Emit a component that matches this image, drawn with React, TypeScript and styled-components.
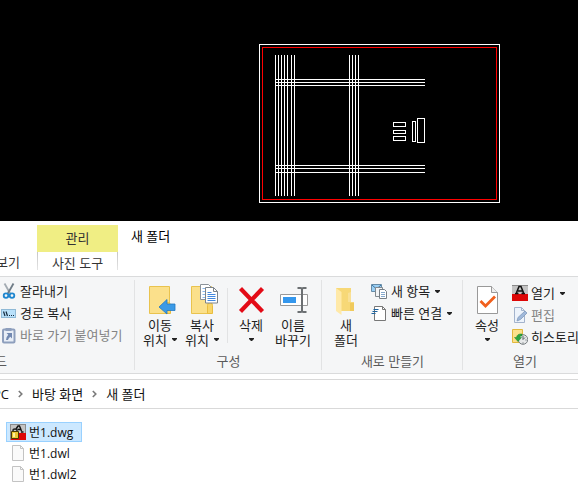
import React from "react";
import styled, { createGlobalStyle } from "styled-components";

const GlobalStyle = createGlobalStyle`
  * { box-sizing: border-box; }
  body {
    margin: 0;
    background: #fff;
    color: #222;
    font-family: "Open Sans", "Noto Sans CJK KR", sans-serif;
    font-size: 13px;
    line-height: 15px;
    overflow-x: hidden;
  }
  button {
    font: inherit;
    color: inherit;
    background: none;
    border: 0;
    padding: 0;
    margin: 0;
    white-space: nowrap;
  }
  svg { display: block; flex: none; }
`;

const Page = styled.main`
  overflow: hidden;
`;

const Canvas = styled.section`
  display: flex;
  justify-content: flex-end;
  padding: 44px 78px 18px 0;
  background: #000;
`;

const TabStrip = styled.header`
  display: flex;
  height: 55px;
  padding-top: 4px;
`;

const ViewTab = styled.button`
  display: flex;
  justify-content: flex-end;
  align-self: flex-end;
  width: 37px;
  padding: 0 17px 6px 0;
  color: #333;
`;

const ContextTab = styled.div`
  display: flex;
  flex-direction: column;
  width: 81px;
`;

const ContextTitle = styled.div`
  height: 27px;
  line-height: 26px;
  text-align: center;
  background: #f0ee84;
  color: #333;
`;

const ToolTab = styled.button`
  height: 18px;
  padding-top: 4px;
  color: #333;
  border: solid;
  border-width: 0 1px;
  border-image: linear-gradient(#c4c4c4, #e6e6e6) 1;
`;

const WindowTitle = styled.h1`
  margin: 0 0 0 13px;
  font-size: 13px;
  font-weight: 400;
  line-height: 23px;
  color: #000;
`;

const Ribbon = styled.div`
  display: flex;
  height: 98px;
  border: solid #dadbdc;
  border-width: 1px 0;
  background: #f5f6f7;
`;

const Group = styled.section<{ $width: number; $inset: number }>`
  display: flex;
  flex: none;
  flex-direction: column;
  justify-content: space-between;
  width: ${(p) => p.$width}px;
  padding: 3px 0 4px;
  background: linear-gradient(#e2e3e4, #e2e3e4) right 3px / 1px 90px no-repeat;

  & > div {
    display: flex;
    padding-left: ${(p) => p.$inset}px;
  }
`;

const GroupLabel = styled.h2<{ $clipped?: boolean }>`
  display: flex;
  justify-content: ${(p) => (p.$clipped ? "flex-end" : "center")};
  width: ${(p) => (p.$clipped ? "7px" : "auto")};
  margin: 0;
  font-size: 13px;
  font-weight: 400;
  white-space: nowrap;
  color: #5a5a5a;
`;

const BigButton = styled.button<{ $width: number }>`
  display: flex;
  flex-direction: column;
  align-items: center;
  width: ${(p) => p.$width}px;
  padding-top: 4px;

  svg:first-child { margin-bottom: 2px; }
`;

const Line = styled.span`
  display: flex;
  align-items: center;
  gap: 5px;
  height: 15px;
`;

const Divider = styled.span`
  width: 1px;
  height: 55px;
  margin: 8px 3px 0 4px;
  background: #e2e3e4;
`;

const Stack = styled.div<{ $top?: number; $left?: number }>`
  display: flex;
  flex-direction: column;
  padding-top: ${(p) => p.$top ?? 0}px;
  padding-left: ${(p) => p.$left ?? 0}px;
`;

const SmallButton = styled.button`
  display: flex;
  align-items: center;
  gap: 3px;
  height: 22px;

  &:disabled { color: #838383; }
  svg:last-child:not(:first-child) { margin-left: 2px; }
`;

const AddressBar = styled.nav`
  margin-top: 5px;
  border: solid #d9d9d9;
  border-width: 1px 0;

  ol {
    display: flex;
    align-items: center;
    height: 28px;
    margin: 0;
    padding: 0;
    list-style: none;
  }
  li {
    display: flex;
    align-items: center;
  }
  li:first-child {
    justify-content: flex-end;
    width: 9px;
  }
  li + li svg { margin: 0 9px; }
  a {
    color: #111;
    text-decoration: none;
    white-space: nowrap;
  }
`;

const FileList = styled.ul`
  margin: 0;
  padding: 13px 6px;
  list-style: none;
  font-size: 12px;
`;

const FileButton = styled.button<{ $selected?: boolean }>`
  display: flex;
  align-items: center;
  gap: 3px;
  height: 20px;
  margin-bottom: 1px;
  padding: 0 8px 0 3px;
  border: 1px solid ${(p) => (p.$selected ? "#99d1ff" : "transparent")};
  background: ${(p) => (p.$selected ? "#cce8ff" : "transparent")};
  color: #111;
`;

const DownArrow = () => (
  <svg width="5" height="3" viewBox="0 0 5 3" aria-hidden="true">
    <path d="M0 0h5v1L3 3H2L0 1z" fill="#222" />
  </svg>
);

const Chevron = () => (
  <svg width="5" height="8" viewBox="0 0 5 8" aria-hidden="true">
    <path d="M.8 1 3.8 4 .8 7" fill="none" stroke="#7a7a7a" strokeWidth="1.6" />
  </svg>
);

const columns = [16, 19, 22, 25, 28, 32, 35, 90, 93, 96, 99];
const beams = [35, 38, 41, 121, 124, 128];

const FloorPlan = () => (
  <svg width="241" height="159" viewBox="0 0 241 159" fill="none" stroke="#fff" shapeRendering="crispEdges" role="img" aria-label="번1.dwg">
    <rect x=".5" y=".5" width="240" height="158" />
    <rect x="3.5" y="3.5" width="234" height="152" stroke="#f00" />
    {columns.map((x) => (
      <path key={x} d={`M${x + 0.5} 11v141`} />
    ))}
    {beams.map((y) => (
      <path key={y} d={`M16 ${y + 0.5}h150`} />
    ))}
    <rect x="134.5" y="78.5" width="12" height="4" />
    <rect x="134.5" y="86.5" width="12" height="3" />
    <rect x="134.5" y="92.5" width="12" height="4" />
    <rect x="153.5" y="77.5" width="3" height="20" />
    <rect x="158.5" y="74.5" width="7" height="24" />
  </svg>
);

const CutIcon = () => (
  <svg width="16" height="18" viewBox="0 0 16 18" fill="none">
    <path d="M3.5 1.500 9.500 12" stroke="#a3abb2" strokeWidth="1.800" />
    <path d="M12.500 1.500 6.500 12" stroke="#6f7c87" strokeWidth="1.800" />
    <circle cx="5" cy="13.600" r="2.300" stroke="#1e86cf" strokeWidth="1.800" />
    <circle cx="11" cy="13.600" r="2.300" stroke="#1e86cf" strokeWidth="1.800" />
  </svg>
);

const PathIcon = () => (
  <svg width="16" height="16" viewBox="0 0 16 16">
    <rect x=".5" y="4.500" width="14" height="8" fill="#b8e0fa" stroke="#8fb9d6" />
    <path d="m2.500 6.500 1.500 4.500M5 6.500l1.500 4.500" stroke="#152b40" strokeWidth="1.200" />
    <path d="M8 10h1v1H8zM10 10h1v1h-1zM12 10h1v1h-1z" fill="#152b40" />
  </svg>
);

const PasteLinkIcon = () => (
  <svg width="16" height="17" viewBox="0 0 16 17">
    <rect x="2" y="2.500" width="11.500" height="13" rx="1" fill="#e8eef7" stroke="#8e9fbd" strokeWidth="2" />
    <path d="M4.500 1h6v3h-6z" fill="#8e9fbd" />
    <path d="M5.500 6H11v5.500L9.300 9.800Q7.500 11 7 13H5q0-3 2.300-5.200z" fill="#7289b1" />
  </svg>
);

const FolderBase = () => (
  <>
    <path d="M5.500 2.500h20v27h-20z" fill="#fbe08b" stroke="#e9c34e" />
    <path d="M21.500 29.500v-8q0-3 2.500-3t2.500 3v8z" fill="#f8d568" stroke="#e9bd3f" />
  </>
);

const MoveIcon = () => (
  <svg width="32" height="32" viewBox="0 0 32 32">
    <FolderBase />
    <path d="M15 23 23 15.500V20h8v6.500h-8V30z" fill="#3b9ae6" stroke="#2278c2" strokeWidth=".8" />
  </svg>
);

const CopyIcon = () => (
  <svg width="32" height="32" viewBox="0 0 32 32">
    <FolderBase />
    <path d="M14.500.500h8l3 3v12h-11z" fill="#fff" stroke="#8b9299" />
    <path d="M16.500 4.500h4m-4 3h4m-4 3h4m-4 3h4" stroke="#8bb8ec" />
    <path d="M19.500 3.500h8l4 4v11.500h-12z" fill="#fff" stroke="#7c8389" />
    <path d="M27.500 3.500v4h4" fill="none" stroke="#7c8389" />
    <path d="M21.500 8.500h4m-4 2h8m-8 2h8m-8 2h8m-8 2h8" stroke="#4389e0" />
  </svg>
);

const DeleteIcon = () => (
  <svg width="32" height="32" viewBox="0 0 32 32">
    <path d="m5.500 4.500 22 23M27.500 4.500l-22 23" stroke="#e30b17" strokeWidth="4.200" />
  </svg>
);

const RenameIcon = () => (
  <svg width="32" height="32" viewBox="0 0 32 32" fill="none">
    <path d="M3.500 10.500h27v11h-27z" fill="#fff" stroke="#999" />
    <path d="M6 13h13v6H6z" fill="#3497ed" />
    <path d="M20.500 4h3q1.500 0 1.500 1.500v21q0 1.500-1.500 1.500h-3M29.500 4h-3Q25 4 25 5.500v21q0 1.500 1.500 1.500h3" stroke="#6c7073" strokeWidth="2" />
  </svg>
);

const NewFolderIcon = () => (
  <svg width="32" height="32" viewBox="0 0 32 32">
    <path d="M6 4h15v14h3v9H6z" fill="#f7d877" />
    <path d="m6 4 5.500 4v23L6 27z" fill="#ffe9a8" />
    <path d="M18 18V9l3-1v10z" fill="#f9e096" />
    <path d="M20 19h4v8h-4z" fill="#f0ca5d" />
  </svg>
);

const NewItemIcon = () => (
  <svg width="17" height="18" viewBox="0 0 17 18">
    <path d="M.500 2.500h10v7H.500z" fill="#9bd0f5" stroke="#668ba7" />
    <path d="m1 3 4.500 4L10 3" fill="none" stroke="#43779f" />
    <path d="M4.500 5.500h7v9h-7z" fill="#f2f4f6" stroke="#81898f" />
    <path d="M8.500 7.500h5l2 2v7h-7z" fill="#fff" stroke="#777f86" />
    <path d="M10 10.500h4m-4 2h4m-4 2h4" stroke="#86a9cd" />
  </svg>
);

const EasyAccessIcon = () => (
  <svg width="17" height="18" viewBox="0 0 17 18">
    <path d="M3.500 2.500h8l3 3v11h-11z" fill="#fff" stroke="#777" />
    <path d="M11.500 2.500v3h3" fill="none" stroke="#777" />
    <path d="M2.500 5.500h5M1.500 7.500h5M.500 9.500h4" stroke="#1d639e" strokeWidth="1.200" />
  </svg>
);

const PropertiesIcon = () => (
  <svg width="32" height="32" viewBox="0 0 32 32">
    <path d="M6.500 2.500h14l6 6v21h-20z" fill="#fff" stroke="#999" />
    <path d="M20.500 2.500v6h6" fill="#eee" stroke="#999" />
    <path d="m9.500 17 5 5L24 12.500" fill="none" stroke="#f1601d" strokeWidth="2.800" />
  </svg>
);

const CadMark = ({ locked }: { locked?: boolean }) => (
  <svg width="16" height="16" viewBox="0 0 16 16">
    <path d="M0 0h16v16H0z" fill="#c4c4c4" />
    <path d="M0 9h16v7H0z" fill="#dd0606" />
    <path d="M0 0h16v1H0z" fill="#8a8a8a" />
    {locked ? (
      <>
        <path d="M0 0h1v16H0zM15 0h1v9h-1z" fill="#8a8a8a" />
        <path d="M6 5 8 2h1.500l2 5M7.500 5.500h4M11 8h2.500" fill="none" stroke="#111" strokeWidth="1.400" />
        <path d="M3 8V6.500Q3 5 5 5t2 1.500V8" fill="none" stroke="#222" strokeWidth="1.400" />
        <path d="M1.500 7.500h7v7h-7z" fill="#edc833" stroke="#4c3c00" />
        <path d="M3 9h2v4H3z" fill="#fff19b" />
      </>
    ) : (
      <path d="M4.800 8.500V7L7 1.500h2L11.200 7v1.500M6 6h4.500M3 8.500h3.500m3 0h3.500" fill="none" stroke="#111" strokeWidth="1.500" />
    )}
  </svg>
);

const EditIcon = () => (
  <svg width="16" height="17" viewBox="0 0 16 17">
    <path d="M2.500.500h7l3 3v12h-10z" fill="#edf3fb" stroke="#a3b3cc" />
    <path d="M9.500.500v3h3" fill="none" stroke="#a3b3cc" />
    <path d="m5 14 1-3.500 7-6.500 2 2-6.500 6.500z" fill="#9fb8da" stroke="#8299bb" strokeWidth=".8" />
  </svg>
);

const HistoryIcon = () => (
  <svg width="16" height="16" viewBox="0 0 16 16">
    <path d="M.500.500h10v13H.500z" fill="#fbe08b" stroke="#e1b83d" />
    <circle cx="11" cy="10.500" r="4.800" fill="#e6e8e9" stroke="#777d80" />
    <path d="M11 7v3.500l2-2M11 13.500v1M13.500 11h1" fill="none" stroke="#596167" />
    <path d="M10 5Q5 4.500 4.500 8.500H2.500l3.500 4 3.500-4H7.500Q7.500 6.500 10 7z" fill="#2ca63f" stroke="#168028" strokeWidth=".5" />
  </svg>
);

const PageIcon = () => (
  <svg width="16" height="16" viewBox="0 0 16 16">
    <path d="M2.500.500h8l3 3v12h-11z" fill="#fafafa" stroke="#c3c3c3" />
    <path d="M10.500.500v3h3" fill="none" stroke="#c3c3c3" />
  </svg>
);

const files = [
  { name: "번1.dwg", cad: true },
  { name: "번1.dwl", cad: false },
  { name: "번1.dwl2", cad: false },
];

export default function App() {
  return (
    <Page>
      <GlobalStyle />
      <Canvas>
        <FloorPlan />
      </Canvas>
      <TabStrip>
        <ViewTab>보기</ViewTab>
        <ContextTab>
          <ContextTitle>관리</ContextTitle>
          <ToolTab>사진 도구</ToolTab>
        </ContextTab>
        <WindowTitle>새 폴더</WindowTitle>
      </TabStrip>
      <Ribbon>
        <Group $width={135} $inset={1}>
          <div>
            <Stack>
              <SmallButton><CutIcon />잘라내기</SmallButton>
              <SmallButton><PathIcon />경로 복사</SmallButton>
              <SmallButton disabled><PasteLinkIcon />바로 가기 붙여넣기</SmallButton>
            </Stack>
          </div>
          <GroupLabel $clipped>클립보드</GroupLabel>
        </Group>
        <Group $width={187} $inset={4}>
          <div>
            <BigButton $width={42}>
              <MoveIcon />
              <Line>이동</Line>
              <Line>위치<DownArrow /></Line>
            </BigButton>
            <BigButton $width={42}>
              <CopyIcon />
              <Line>복사</Line>
              <Line>위치<DownArrow /></Line>
            </BigButton>
            <Divider />
            <BigButton $width={40}>
              <DeleteIcon />
              <Line>삭제</Line>
              <Line><DownArrow /></Line>
            </BigButton>
            <BigButton $width={44}>
              <RenameIcon />
              <Line>이름</Line>
              <Line>바꾸기</Line>
            </BigButton>
          </div>
          <GroupLabel>구성</GroupLabel>
        </Group>
        <Group $width={141} $inset={1}>
          <div>
            <BigButton $width={46}>
              <NewFolderIcon />
              <Line>새</Line>
              <Line>폴더</Line>
            </BigButton>
            <Stack $left={2}>
              <SmallButton><NewItemIcon />새 항목<DownArrow /></SmallButton>
              <SmallButton><EasyAccessIcon />빠른 연결<DownArrow /></SmallButton>
            </Stack>
          </div>
          <GroupLabel>새로 만들기</GroupLabel>
        </Group>
        <Group $width={124} $inset={1}>
          <div>
            <BigButton $width={46}>
              <PropertiesIcon />
              <Line>속성</Line>
              <Line><DownArrow /></Line>
            </BigButton>
            <Stack $top={2} $left={2}>
              <SmallButton><CadMark />열기<DownArrow /></SmallButton>
              <SmallButton disabled><EditIcon />편집</SmallButton>
              <SmallButton><HistoryIcon />히스토리</SmallButton>
            </Stack>
          </div>
          <GroupLabel>열기</GroupLabel>
        </Group>
      </Ribbon>
      <AddressBar aria-label="경로">
        <ol>
          <li><a href="#pc">PC</a></li>
          <li><Chevron /><a href="#desktop">바탕 화면</a></li>
          <li><Chevron /><a href="#folder">새 폴더</a></li>
        </ol>
      </AddressBar>
      <FileList>
        {files.map((file) => (
          <li key={file.name}>
            <FileButton $selected={file.cad}>
              {file.cad ? <CadMark locked /> : <PageIcon />}
              {file.name}
            </FileButton>
          </li>
        ))}
      </FileList>
    </Page>
  );
}
